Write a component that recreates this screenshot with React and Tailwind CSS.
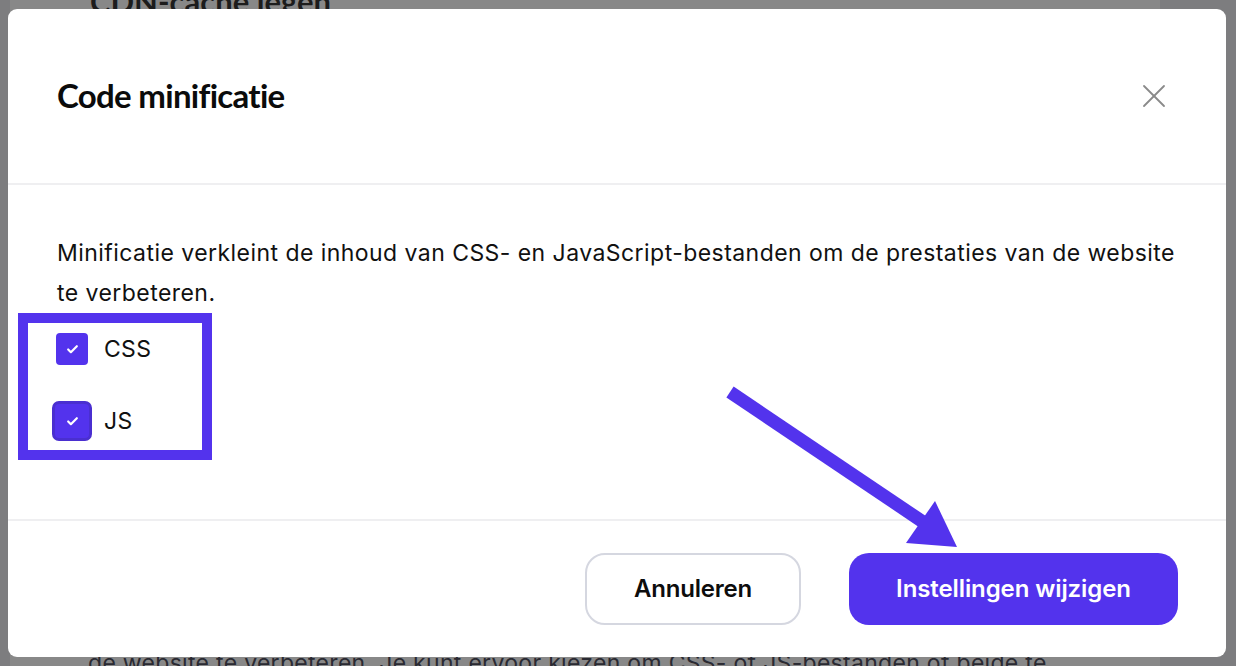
import React, { useState } from "react";
import { X, Check } from "lucide-react";

function Checkbox({ checked, focused, label, onToggle }) {
  return (
    <label className="flex items-center gap-3 cursor-pointer select-none">
      <span className="w-10 h-10 flex items-center justify-center">
        <span
          onClick={onToggle}
          className={
            focused
              ? "w-10 h-10 rounded-[7px] bg-[#5333ed] border-[3px] border-[#4a2fd0] flex items-center justify-center"
              : "w-8 h-8 rounded-[4px] bg-[#5333ed] flex items-center justify-center"
          }
        >
          {checked && <Check size={13} strokeWidth={4} color="#fff" />}
        </span>
      </span>
      <span className="text-[23px] tracking-[0.3px] text-[#111]">{label}</span>
    </label>
  );
}

export default function App() {
  const [css, setCss] = useState(true);
  const [js, setJs] = useState(true);

  return (
    <div className="relative h-[666px] w-[1236px] overflow-hidden bg-[#7d7d7f] font-['Inter',sans-serif]">
      {/* page behind the dimmed overlay */}
      <div className="ml-[10px] w-[1150px] h-full bg-[#888888] flex flex-col justify-between">
        <div className="-mt-[22px] pl-[80px] text-[31px] font-bold text-[#1c1c1c] font-['Lato',sans-serif]">CDN-cache legen</div>
        <div className="-mb-[14px] pl-[78px] text-[23px] tracking-[0.3px] text-[#2a2a32]">
          de website te verbeteren. Je kunt ervoor kiezen om CSS- of JS-bestanden of beide te
        </div>
      </div>

      {/* modal */}
      <div className="absolute left-[8px] top-[9px] w-[1218px] h-[648px] bg-white rounded-[9px] flex flex-col">
        <div className="h-[176px] flex items-center justify-between pl-[49px] pr-[52px] border-b-2 border-[#efeff1]">
          <h2 className="text-[33px] font-bold text-[#0b0b0b] font-['Lato',sans-serif] tracking-[-0.7px]">Code minificatie</h2>
          <X size={40} strokeWidth={1.1} color="#8a8a8a" />
        </div>

        <div className="flex-1 pl-[49px] pr-[49px] pt-[48px] border-b-2 border-[#efeff1]">
          <p className="text-[23px] leading-[40px] tracking-[0.45px] text-[#111]">
            Minificatie verkleint de inhoud van CSS- en JavaScript-bestanden om de prestaties van de website te verbeteren.
          </p>
          <div className="mt-0 -ml-[39px] w-[194px] h-[147px] border-[10px] border-[#5333ed] flex flex-col gap-[32px] pl-[24px] pt-[6px]">
            <Checkbox checked={css} label="CSS" onToggle={() => setCss(!css)} />
            <Checkbox checked={js} focused label="JS" onToggle={() => setJs(!js)} />
          </div>
        </div>

        <div className="h-[136px] flex items-center justify-end gap-[48px] pr-[48px]">
          <button className="w-[216px] h-[72px] rounded-[20px] border-2 border-[#d5d7e0] bg-white text-[24px] font-semibold tracking-[-0.2px] text-[#0d0d0d]">
            Annuleren
          </button>
          <button className="w-[329px] h-[72px] rounded-[20px] bg-[#5333ed] text-[24px] font-semibold tracking-[-0.1px] text-white">
            Instellingen wijzigen
          </button>
        </div>
      </div>

      {/* annotation arrow */}
      <svg className="absolute left-0 top-0 pointer-events-none" width="1236" height="666">
        <line x1="730" y1="392" x2="932" y2="528" stroke="#5333ed" strokeWidth="13" />
        <polygon points="935,501 906,543 957,547" fill="#5333ed" />
      </svg>
    </div>
  );
}
